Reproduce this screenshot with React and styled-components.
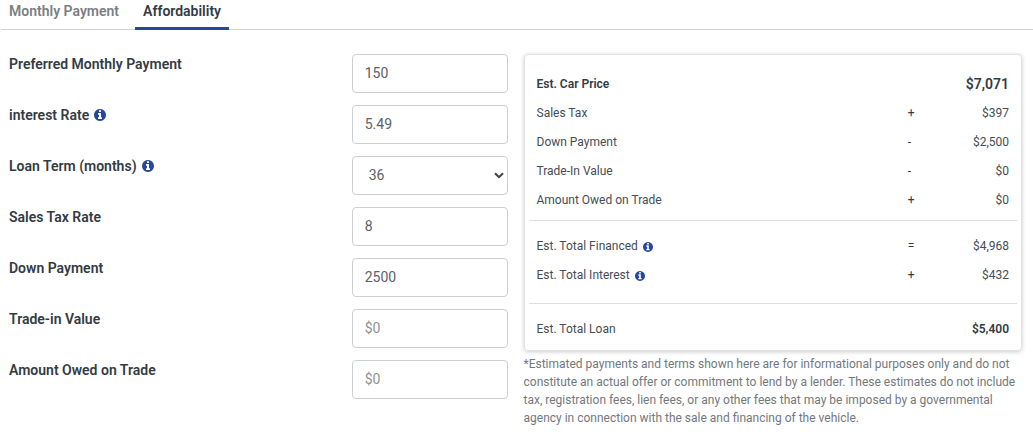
import React, { useState } from 'react';
import styled, { createGlobalStyle } from 'styled-components';

const tabs = ['Monthly Payment', 'Affordability'];

const fields = [
  { id: 'payment', label: 'Preferred Monthly Payment', value: '150' },
  { id: 'interest', label: 'interest Rate', value: '5.49', info: true },
  { id: 'term', label: 'Loan Term (months)', value: '36', info: true, options: ['12', '24', '36', '48', '60', '72'] },
  { id: 'tax', label: 'Sales Tax Rate', value: '8' },
  { id: 'down', label: 'Down Payment', value: '2500' },
  { id: 'trade', label: 'Trade-in Value', value: '' },
  { id: 'owed', label: 'Amount Owed on Trade', value: '' },
];

const groups = [
  {
    top: 15,
    bottom: 5,
    rows: [
      { label: 'Est. Car Price', amount: '$7,071', strong: true, large: true },
      { label: 'Sales Tax', sign: '+', amount: '$397' },
      { label: 'Down Payment', sign: '-', amount: '$2,500' },
      { label: 'Trade-In Value', sign: '-', amount: '$0' },
      { label: 'Amount Owed on Trade', sign: '+', amount: '$0' },
    ],
  },
  {
    top: 11,
    bottom: 13,
    rows: [
      { label: 'Est. Total Financed', sign: '=', amount: '$4,968', info: true },
      { label: 'Est. Total Interest', sign: '+', amount: '$432', info: true },
    ],
  },
  {
    top: 11,
    bottom: 6,
    rows: [{ label: 'Est. Total Loan', amount: '$5,400', total: true }],
  },
];

const Info = ({ about, small }) => (
  <InfoButton type='button' aria-label={`About ${about}`} $small={small}>
    <svg viewBox='128 128 1536 1536' width='1em' height='1em' fill='currentColor' aria-hidden='true'>
      <path d='M1152 1376v-160q0-14-9-23t-23-9h-96v-512q0-14-9-23t-23-9h-320q-14 0-23 9t-9 23v160q0 14 9 23t23 9h96v320h-96q-14 0-23 9t-9 23v160q0 14 9 23t23 9h448q14 0 23-9t9-23zm-128-896v-160q0-14-9-23t-23-9h-192q-14 0-23 9t-9 23v160q0 14 9 23t23 9h192q14 0 23-9t9-23zm640 416q0 209-103 385.500t-279.500 279.500-385.500 103-385.500-103-279.500-279.500-103-385.500 103-385.500 279.500-279.500 385.500-103 385.500 103 279.500 279.500 103 385.500z' />
    </svg>
  </InfoButton>
);

export default function App() {
  const [active, setActive] = useState('Affordability');
  const [values, setValues] = useState(
    Object.fromEntries(fields.map(field => [field.id, field.value]))
  );

  const handleChange = (evt) => {
    const { id, value } = evt.target;
    setValues(prev => ({ ...prev, [id]: value }));
  };

  return (
    <>
      <GlobalStyle />
      <TabBar role='tablist'>
        {tabs.map(tab =>
          <Tab
            key={tab}
            type='button'
            role='tab'
            aria-selected={tab === active}
            $active={tab === active}
            onClick={() => setActive(tab)}>
            {tab}
          </Tab>
        )}
      </TabBar>
      <Calculator>
        <Form>
          {fields.map(field =>
            <Field key={field.id}>
              <LabelCell>
                <label htmlFor={field.id}>{field.label}</label>
                {field.info && <Info about={field.label} />}
              </LabelCell>
              {field.options
                ? <SelectWrap>
                    <Select id={field.id} value={values[field.id]} onChange={handleChange}>
                      {field.options.map(option => <option key={option}>{option}</option>)}
                    </Select>
                    <Chevron viewBox='0 0 10 7' aria-hidden='true'>
                      <path d='M1 1.2 L5 5.2 L9 1.2' />
                    </Chevron>
                  </SelectWrap>
                : <Input
                    id={field.id}
                    type='text'
                    placeholder='$0'
                    value={values[field.id]}
                    onChange={handleChange}
                  />}
            </Field>
          )}
        </Form>
        <div>
          <Card>
            <Table>
              {groups.map((group, index) =>
                <Group key={index} $top={group.top} $bottom={group.bottom}>
                  {group.rows.map(row =>
                    <tr key={row.label}>
                      <RowLabel scope='row' $strong={row.strong}>
                        <LabelText>
                          {row.label}
                          {row.info && <Info about={row.label} small />}
                        </LabelText>
                      </RowLabel>
                      <Sign>{row.sign}</Sign>
                      <Amount $strong={row.strong || row.total} $large={row.large}>{row.amount}</Amount>
                    </tr>
                  )}
                </Group>
              )}
            </Table>
          </Card>
          <Disclaimer>
            *Estimated payments and terms shown here are for informational purposes only and do not
            constitute an actual offer or commitment to lend by a lender. These estimates do not include
            tax, registration fees, lien fees, or any other fees that may be imposed by a governmental
            agency in connection with the sale and financing of the vehicle.
          </Disclaimer>
        </div>
      </Calculator>
    </>
  );
}

const textColor = '#333b44';
const accentColor = '#27479b';

const GlobalStyle = createGlobalStyle`
  * {
    box-sizing: border-box;
  }

  body {
    margin: 0;
    background: white;
    color: ${textColor};
    font-family: Roboto, 'Liberation Sans', sans-serif;
    font-size: 14px;
  }

  button, input, select {
    font-family: inherit;
  }
`;

const TabBar = styled.div`
  display: flex;
  gap: 8px;
  height: 30px;
  margin-left: 1px;
  border-bottom: 1px solid #cfd2d4;
`;

const Tab = styled.button`
  height: 30px;
  padding: 0 8px 5px;
  border: 0;
  border-bottom: 3px solid ${props => props.$active ? accentColor : 'transparent'};
  background: none;
  color: ${props => props.$active ? textColor : '#7b7f82'};
  font-size: 14px;
  font-weight: 600;
  line-height: 20px;
  cursor: pointer;
`;

const Calculator = styled.div`
  display: grid;
  grid-template-columns: 1fr 1fr;
  gap: 16px;
  padding: 24px 11px 0 9px;
`;

const Form = styled.form`
  display: flex;
  flex-direction: column;
  gap: 12px;
`;

const Field = styled.div`
  display: grid;
  grid-template-columns: 11fr 5fr;
  align-items: start;
`;

const LabelCell = styled.div`
  display: flex;
  align-items: center;
  gap: 5px;
  height: 20px;
  font-weight: 600;
`;

const InfoButton = styled.button`
  display: flex;
  padding: 0;
  border: 0;
  background: none;
  color: ${accentColor};
  font-size: ${props => props.$small ? '10px' : '12px'};
  cursor: pointer;
`;

const Input = styled.input`
  width: 100%;
  height: 39px;
  padding: 0 12px 2px;
  border: 1px solid #cccfd2;
  border-radius: 4px;
  background: white;
  color: #5d6167;
  font-size: 14px;

  &::placeholder {
    color: #8f9295;
    opacity: 1;
  }
`;

const SelectWrap = styled.div`
  position: relative;
`;

const Select = styled(Input).attrs({ as: 'select' })`
  display: block;
  padding: 0 16px 2px;
  appearance: none;
`;

const Chevron = styled.svg`
  position: absolute;
  top: 16px;
  right: 4px;
  width: 10px;
  height: 7px;
  fill: none;
  stroke: #3f4246;
  stroke-width: 2;
  pointer-events: none;
`;

const Card = styled.div`
  padding: 0 4px;
  border: 1px solid #dfe1e3;
  border-radius: 4px;
  box-shadow: 0 1px 4px rgba(0, 0, 0, 0.2);
`;

const Table = styled.table`
  width: 100%;
  border-collapse: collapse;
  font-size: 12px;
`;

const Group = styled.tbody`
  & + & {
    border-top: 1px solid #dcdfe1;
  }

  th, td {
    height: 29px;
    padding: 0 8px;
    line-height: 29px;
  }

  tr:first-child > * {
    height: ${props => 29 + props.$top}px;
    padding-top: ${props => props.$top}px;
  }

  tr:last-child > * {
    padding-bottom: ${props => props.$bottom}px;
  }
`;

const RowLabel = styled.th`
  color: ${props => props.$strong ? textColor : '#464d55'};
  font-weight: ${props => props.$strong ? 600 : 400};
  text-align: left;
`;

const LabelText = styled.span`
  display: flex;
  align-items: center;
  gap: 5px;
`;

const Sign = styled.td`
  width: 58px;
`;

const Amount = styled.td`
  width: 54px;
  color: ${props => props.$strong ? textColor : '#464d55'};
  font-size: ${props => props.$large ? '14px' : '12px'};
  font-weight: ${props => props.$strong ? 600 : 400};
  text-align: right;
`;

const Disclaimer = styled.p`
  margin: 4px 0 0;
  color: #73787c;
  font-size: 12px;
  line-height: 18px;
`;
